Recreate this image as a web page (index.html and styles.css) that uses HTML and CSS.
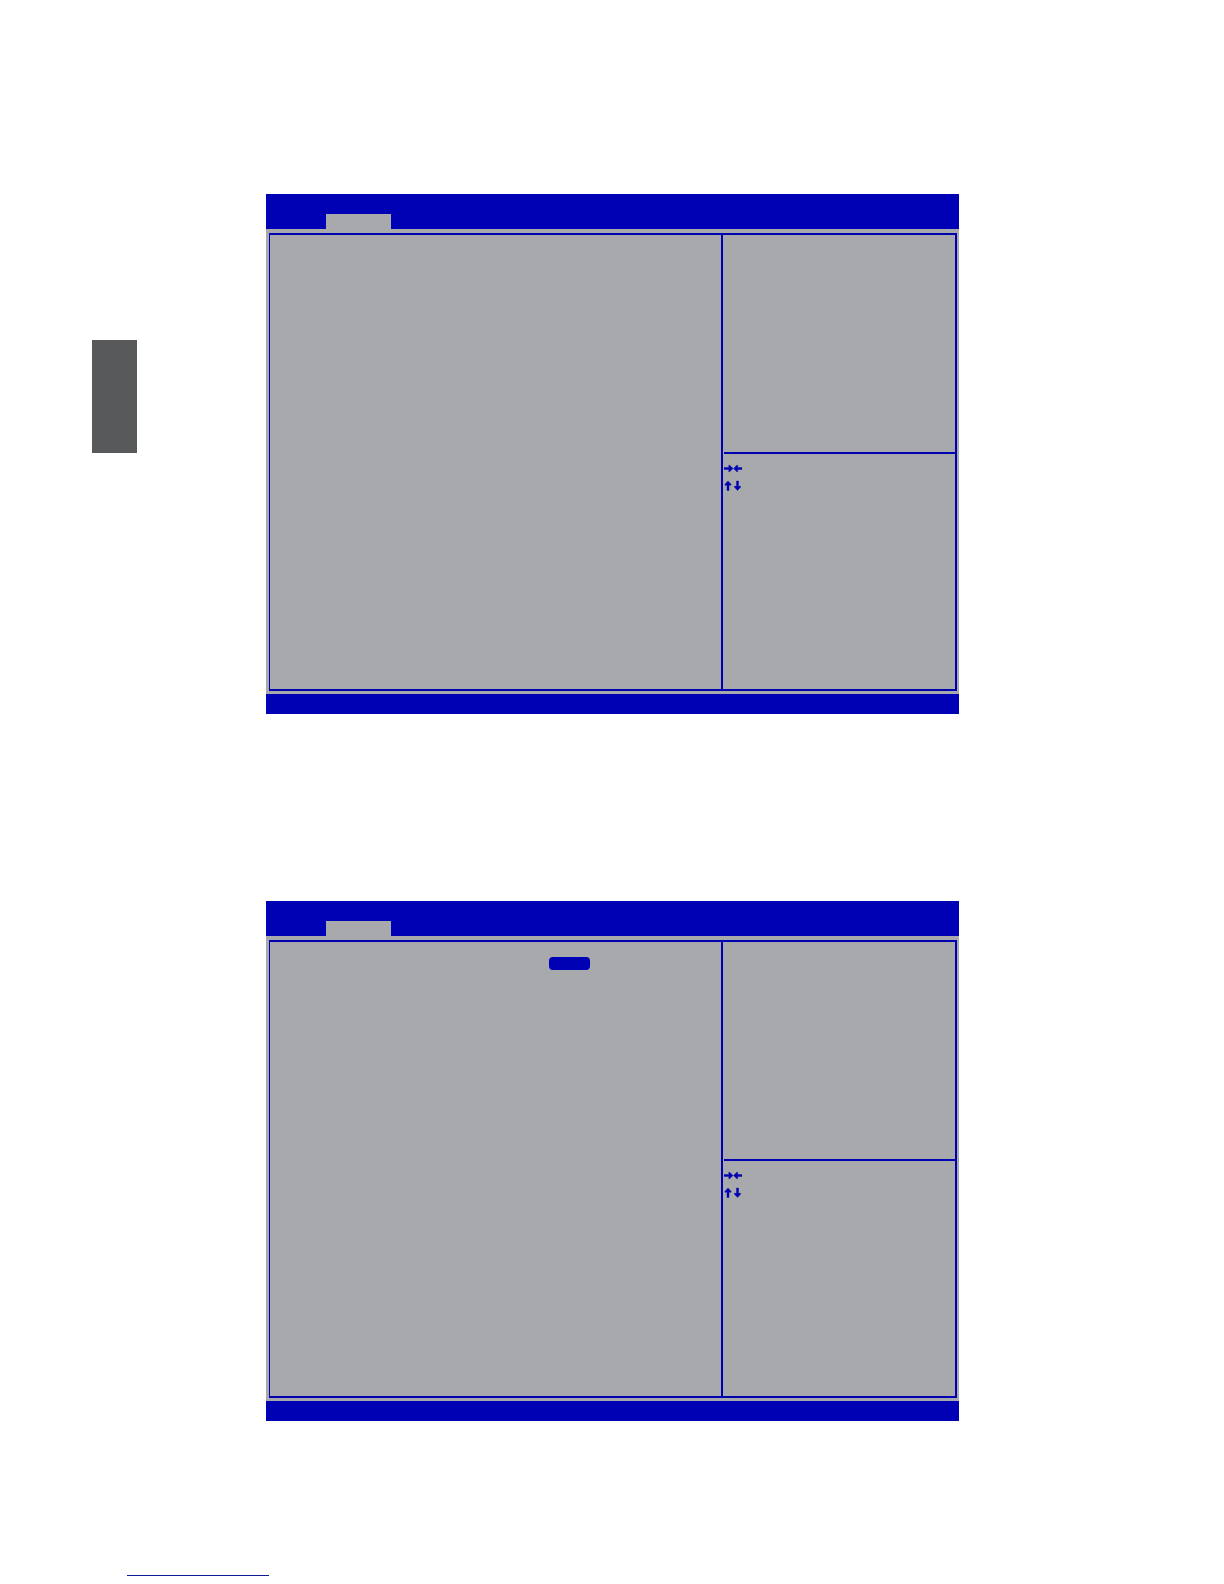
FILE: index.html
```html
<!DOCTYPE html>
<html lang="en">
<head>
  <meta charset="UTF-8">
  <meta name="viewport" content="width=device-width, initial-scale=1.0">
  <title>BIOS Setup</title>
  <link rel="stylesheet" href="styles.css">
</head>
<body>
  <div class="page">
    <aside class="chapter-tab"></aside>
    <main class="screens">
      <section class="bios">
        <header class="bios-header">
          <button type="button" class="bios-tab" aria-label="Active tab"></button>
        </header>
        <div class="bios-body">
          <div class="bios-frame">
            <div class="options"></div>
            <div class="side">
              <div class="help"></div>
              <div class="keys">
                <!-- select screen -->
                <svg class="key-icon" width="18" height="11" viewBox="0 0 18 11">
                  <path d="M0 4.6H5L4.6 2.6L5.6 2.2L9 5.5L5.6 8.8L4.6 8.4L5 6.4H0Z"/>
                  <path d="M18 4.6H13.5L13.9 2.6L12.9 2.2L9.5 5.5L12.9 8.8L13.9 8.4L13.5 6.4H18Z"/>
                </svg>
                <!-- select item -->
                <svg class="key-icon" width="18" height="11" viewBox="0 0 18 11">
                  <path d="M3 10.5V5L1.2 5.4L0.8 4.4L4 1L7.2 4.4L6.8 5.4L5 5V10.5Z"/>
                  <path d="M12.5 1V6.5L10.7 6.1L10.3 7.1L13.5 10.5L16.7 7.1L16.3 6.1L14.5 6.5V1Z"/>
                </svg>
              </div>
            </div>
          </div>
        </div>
        <footer class="bios-footer"></footer>
      </section>

      <section class="bios">
        <header class="bios-header">
          <button type="button" class="bios-tab" aria-label="Active tab"></button>
        </header>
        <div class="bios-body">
          <div class="bios-frame">
            <div class="options">
              <button type="button" class="selected-value" aria-label="Selected value"></button>
            </div>
            <div class="side">
              <div class="help"></div>
              <div class="keys">
                <!-- select screen -->
                <svg class="key-icon" width="18" height="11" viewBox="0 0 18 11">
                  <path d="M0 4.6H5L4.6 2.6L5.6 2.2L9 5.5L5.6 8.8L4.6 8.4L5 6.4H0Z"/>
                  <path d="M18 4.6H13.5L13.9 2.6L12.9 2.2L9.5 5.5L12.9 8.8L13.9 8.4L13.5 6.4H18Z"/>
                </svg>
                <!-- select item -->
                <svg class="key-icon" width="18" height="11" viewBox="0 0 18 11">
                  <path d="M3 10.5V5L1.2 5.4L0.8 4.4L4 1L7.2 4.4L6.8 5.4L5 5V10.5Z"/>
                  <path d="M12.5 1V6.5L10.7 6.1L10.3 7.1L13.5 10.5L16.7 7.1L16.3 6.1L14.5 6.5V1Z"/>
                </svg>
              </div>
            </div>
          </div>
        </div>
        <footer class="bios-footer"></footer>
      </section>
    </main>
  </div>
  <hr class="page-rule">
</body>
</html>
```
FILE: styles.css
```css
body {
  font-family: "Liberation Sans", Arial, sans-serif;
  background-color: #ffffff;
  margin: 0;
  padding: 194px 0 8px;
}
.page {
  display: flex;
  align-items: flex-start;
  gap: 129px;
  padding: 0 265px 0 92px;
}
.chapter-tab {
  flex: none;
  width: 45px;
  height: 113px;
  margin-top: 146px;
  background-color: #58595b;
}
.screens {
  flex: 1;
  display: flex;
  flex-direction: column;
  gap: 187px;
}
.bios {
  background-color: #a7a9ac;
}
.bios-header {
  display: flex;
  align-items: flex-end;
  height: 35px;
  padding-left: 60px;
  background-color: #0000b4;
}
.bios-tab {
  width: 65px;
  height: 15px;
  padding: 0;
  border: none;
  background-color: #a7a9ac;
  cursor: pointer;
}
.bios-body {
  padding: 4px 2px 3px 3px;
}
.bios-frame {
  display: grid;
  grid-template-columns: 451fr 234fr;
  min-height: 454px;
  border: 2px solid #0000b0;
  border-left-width: 1px;
}
.options {
  display: flex;
  align-items: flex-start;
  padding: 15px 131px 0 0;
}
.selected-value {
  width: 41px;
  height: 13px;
  margin-left: auto;
  padding: 0;
  border: none;
  border-radius: 4px;
  background-color: #0000b4;
  cursor: pointer;
}
.side {
  display: flex;
  flex-direction: column;
  border-left: 2px solid #0000b0;
}
.help {
  height: 217px;
  margin-left: 1px;
  border-bottom: 2px solid #0000b0;
}
.keys {
  display: flex;
  flex-direction: column;
  gap: 6px;
  padding: 9px 0 0 1px;
}
.key-icon {
  fill: #0000b0;
  stroke: #0000b0;
  stroke-width: 0.4;
  stroke-linejoin: round;
}
.bios-footer {
  height: 20px;
  background-color: #0000b4;
}
.page-rule {
  width: 142px;
  height: 1px;
  margin: 154px 0 0 127px;
  border: none;
  background-color: #0c1a94;
}
```
